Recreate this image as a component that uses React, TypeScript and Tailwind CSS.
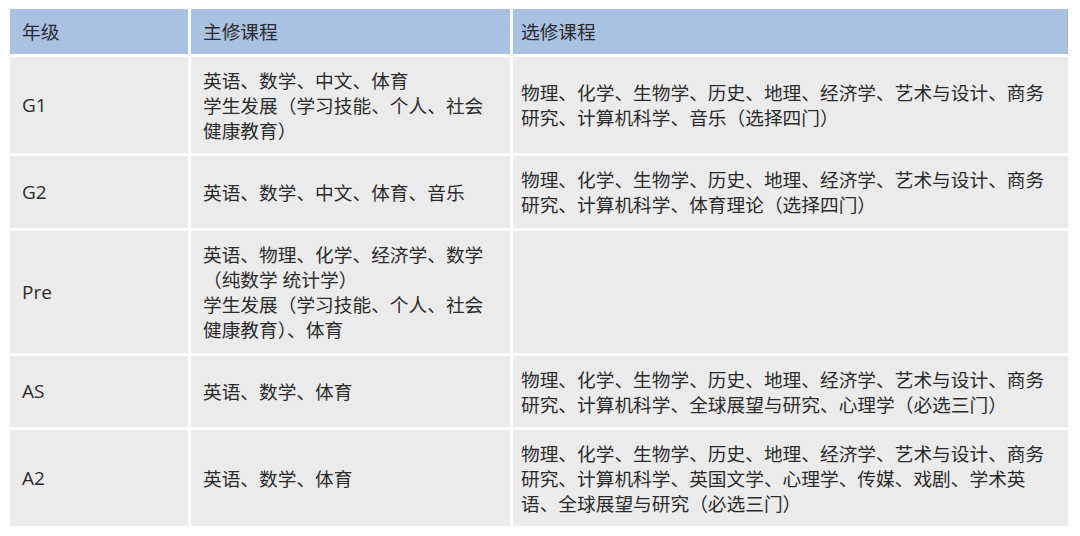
const font = { fontFamily: '"Open Sans", "Noto Sans CJK SC", sans-serif' };

type Row = { grade: string; main: string[]; elective: string[]; h: string };

const rows: Row[] = [
  {
    grade: "G1",
    main: ["英语、数学、中文、体育", "学生发展（学习技能、个人、社会", "健康教育）"],
    elective: ["物理、化学、生物学、历史、地理、经济学、艺术与设计、商务", "研究、计算机科学、音乐（选择四门）"],
    h: "h-[96px]",
  },
  {
    grade: "G2",
    main: ["英语、数学、中文、体育、音乐"],
    elective: ["物理、化学、生物学、历史、地理、经济学、艺术与设计、商务", "研究、计算机科学、体育理论（选择四门）"],
    h: "h-[72px]",
  },
  {
    grade: "Pre",
    main: ["英语、物理、化学、经济学、数学", "（纯数学 统计学）", "学生发展（学习技能、个人、社会", "健康教育）、体育"],
    elective: [],
    h: "h-[122px]",
  },
  {
    grade: "AS",
    main: ["英语、数学、体育"],
    elective: ["物理、化学、生物学、历史、地理、经济学、艺术与设计、商务", "研究、计算机科学、全球展望与研究、心理学（必选三门）"],
    h: "h-[71px]",
  },
  {
    grade: "A2",
    main: ["英语、数学、体育"],
    elective: [
      "物理、化学、生物学、历史、地理、经济学、艺术与设计、商务",
      "研究、计算机科学、英国文学、心理学、传媒、戏剧、学术英",
      "语、全球展望与研究（必选三门）",
    ],
    h: "h-[96px]",
  },
];

function Lines({ lines }: { lines: string[] }) {
  return (
    <div className="whitespace-nowrap">
      {lines.map((l, i) => (
        <div key={i}>{l}</div>
      ))}
    </div>
  );
}

export default function App() {
  return (
    <div className="w-[1080px] h-[536px] bg-white pt-[9px] pl-[10px]" style={font}>
      <div className="grid grid-cols-[178px_319px_555px] gap-[3px] text-[18.7px] leading-[25px] text-[#2b2b2b]">
        <div className="h-[45px] bg-[#a9c2e4] flex items-center pl-[12px]">年级</div>
        <div className="h-[45px] bg-[#a9c2e4] flex items-center pl-[12px]">主修课程</div>
        <div className="h-[45px] bg-[#a9c2e4] flex items-center pl-[8px] border-r border-[#9fb3cf]">选修课程</div>
        {rows.map((r) => (
          <div key={r.grade} className="contents">
            <div className={`${r.h} bg-[#ebebeb] flex items-center pl-[12px] text-[19px]`}>{r.grade}</div>
            <div className={`${r.h} bg-[#ebebeb] flex items-center pl-[12px]`}>
              <Lines lines={r.main} />
            </div>
            <div className={`${r.h} bg-[#ebebeb] flex items-center pl-[8px]`}>
              <Lines lines={r.elective} />
            </div>
          </div>
        ))}
      </div>
    </div>
  );
}
